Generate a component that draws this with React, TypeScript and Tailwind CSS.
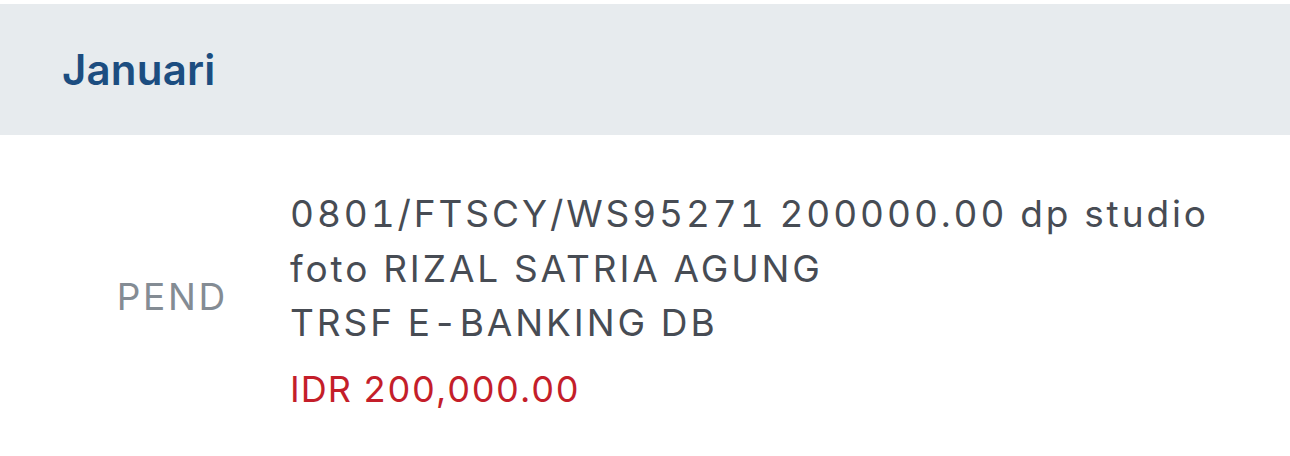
export default function App() {
  return (
    <div className="w-[1290px] h-[456px] bg-white overflow-hidden" style={{ fontFamily: "Inter, 'Noto Sans', sans-serif" }}>
      <div className="mt-[4px] h-[131px] bg-[#e7ebee] flex items-center pl-[62px]">
        <span className="text-[42px] font-semibold text-[#1c4d80] leading-none tracking-[0.2px]">Januari</span>
      </div>
      <div className="flex items-center pt-[52px]">
        <div className="w-[290px] flex justify-end pr-[62px]">
          <span className="text-[37px] text-[#848c94] leading-none tracking-[2.7px]">PEND</span>
        </div>
        <div className="flex flex-col">
          <div className="text-[37px] leading-[54.5px] text-[#474c54] tracking-[2.9px] [font-variant-numeric:tabular-nums]">
            <div>0801/FTSCY/WS95271 200000.00 dp studio</div>
            <div>foto RIZAL SATRIA AGUNG</div>
            <div>TRSF E-BANKING DB</div>
          </div>
          <div className="mt-[20px] text-[36px] leading-[36px] text-[#c41e2a] tracking-[1.1px] [font-variant-numeric:tabular-nums]">IDR 200,000.00</div>
        </div>
      </div>
    </div>
  );
}
